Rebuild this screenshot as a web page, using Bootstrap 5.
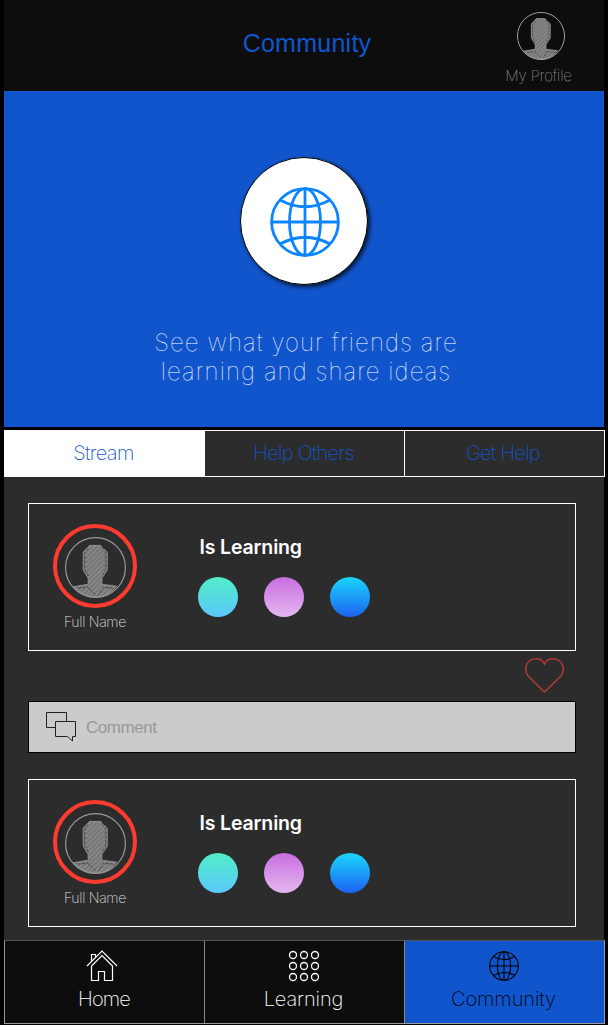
<!DOCTYPE html>
<html lang="en">
<head>
<meta charset="utf-8">
<meta name="viewport" content="width=device-width, initial-scale=1">
<title>Community</title>
<link href="https://cdn.jsdelivr.net/npm/bootstrap@5.3.0/dist/css/bootstrap.min.css" rel="stylesheet">
<style>
  body { background: #000; font-family: "Liberation Sans", Arial, sans-serif; height: 1025px; overflow: hidden; }
  svg { display: block; flex: none; overflow: visible; }
  .app { width: 601px; height: 1024px; margin-left: 4px; }
  .thin { font-family: Inter, "Liberation Sans", sans-serif; font-weight: 100; white-space: nowrap; }
  .topbar { width: 600px; height: 91px; background: #0d0d0d; }
  .topbar h1 { font-size: 25px; line-height: 30px; color: #1155cc; letter-spacing: .25px; padding-top: 28px; padding-left: 6px; }
  .profile { right: 29px; top: 12px; width: 68px; color: #aaa; }
  .profile span { font-size: 15px; line-height: 18px; margin: 7px 5px 0 0; letter-spacing: -.1px; color: #ddd; }
  .hero { width: 600px; height: 336px; background: #1155cc; color: #fff; padding-top: 66px; }
  .disc { width: 128px; height: 128px; border: 1px solid #000; background: #fff; box-shadow: 2px 2px 4px rgba(0,0,0,.75); color: #0a84ff; padding-left: 2px; padding-top: 2px; }
  .hero p { font-size: 24px; line-height: 29px; margin-top: 43px; margin-left: 4px; letter-spacing: 1.08px; }
  .tabs { height: 47px; margin-top: 3px; border: 1px solid #fff; background: #2c2c2c; }
  .tabs a { width: 200px; font-size: 20px; line-height: 45px; color: #1155cc; border-right: 1px solid #fff; letter-spacing: -.75px; font-weight: 200; }
  .tabs a:last-child { width: 199px; border: 0; padding-right: 3px; }
  .tabs a:nth-child(2) { padding-right: 2px; }
  .tabs a.active { background: #fff; padding-right: 2px; letter-spacing: -.6px; }
  .stream { width: 600px; height: 463px; background: #2c2c2c; padding: 26px 28px 0 24px; }
  .post { height: 148px; border: 1px solid #fff; padding: 20.4px 0 0 24px; }
  .who { width: 84px; color: #ddd; }
  .ring { width: 84px; height: 84px; border: 4px solid #ff3b30; padding: 9px 0 0 8px; color: #999; }
  .who span { font-size: 14px; line-height: 18px; margin-top: 4.600px; letter-spacing: -.28px; font-weight: 200; }
  .skills { margin-left: 61px; padding-top: 10.6px; }
  .skills h2 { font-size: 19.500px; line-height: 24px; margin: 0 0 18px 1.500px; color: #fff; font-family: Inter, sans-serif; font-weight: 600; letter-spacing: -.15px; }
  .dots { gap: 26px; }
  .dots i { width: 40px; height: 40px; }
  .d1 { background: linear-gradient(#52edc7, #5ac8fb); }
  .d2 { background: linear-gradient(#c86edf, #e4b7f0); }
  .d3 { background: linear-gradient(#1ad6fd, #1d62f0); }
  .likes { height: 50px; padding: 7px 11px 0 0; }
  .reply { height: 52px; border: 1px solid #000; background: #cbcbcb; margin-bottom: 26px; padding-left: 17px; color: #999; font-size: 17px; letter-spacing: -.45px; }
  .reply span { margin-left: 10px; padding-top: 1px; }
  .bottom { height: 84px; border: 1px solid #999; border-top-color: #555; background: #0d0d0d; }
  .bottom a { width: 200px; padding: 9px 2px 0 0; border-right: 1px solid #888; color: #fff; font-size: 20px; }
  .bottom a:last-child { width: 199px; border: 0; }
  .bottom a.active { background: #1155cc; color: #000; }
  .bottom span { line-height: 24px; margin-top: 5px; font-weight: 200; letter-spacing: -.1px; }
  .bottom a:first-child span { letter-spacing: -.9px; margin-right: -3px; }
</style>
</head>
<body>
<svg width="0" height="0" class="position-absolute" aria-hidden="true">
  <defs>
    <pattern id="hatch" width="5" height="5" patternUnits="userSpaceOnUse">
      <path d="M-1 1L1-1M-1 6L6-1M4 6L6 4" stroke="#a0a0a0" stroke-width=".9"/>
    </pattern>
    <path id="bust" d="M25 8.500h11l7 7v18l-5.500 8.500v6l15 2Q44 61 31 61T8.500 50.500l15-2.500v-6L18.500 33.500v-18z"/>
    <symbol id="avatar" viewBox="0 0 62 62">
      <use href="#bust" fill="#777"/>
      <use href="#bust" fill="url(#hatch)" stroke="currentColor" stroke-width=".8"/>
      <path d="M23.500 11.500l-3.500 4.500v17l4 7M38 10.500l3.500 5.500v17l-4 7M13 52l10-1 9 8.500M49 52l-10-1-5 8" fill="none" stroke="#333" stroke-width=".8" stroke-dasharray="3 1.500"/>
      <circle cx="31" cy="31" r="30.400" fill="none" stroke="currentColor" stroke-width="1.200"/>
    </symbol>
    <symbol id="globe" viewBox="0 0 70 70">
      <g fill="none" stroke="currentColor">
        <circle cx="35" cy="35" r="33.400"/>
        <ellipse cx="35" cy="35" rx="15.500" ry="33.400"/>
        <path d="M35 1.500v67M1.500 35h67M10 13q25 13.500 50 0M10 57q25-13.500 50 0"/>
      </g>
    </symbol>
  </defs>
</svg>

<div class="app d-flex flex-column">
  <header class="topbar position-relative text-center">
    <h1 class="m-0 fw-normal">Community</h1>
    <div class="profile position-absolute d-flex flex-column align-items-center">
      <svg width="48" height="48"><use href="#avatar"/></svg>
      <span class="thin">My Profile</span>
    </div>
  </header>

  <section class="hero d-flex flex-column align-items-center text-center">
    <div class="disc rounded-circle d-flex align-items-center justify-content-center">
      <svg width="70" height="70" stroke-width="2.800"><use href="#globe"/></svg>
    </div>
    <p class="thin mb-0">See what your friends are<br>learning and share ideas</p>
  </section>

  <nav class="tabs d-flex text-center flex-shrink-0">
    <a class="thin active text-decoration-none">Stream</a>
    <a class="thin text-decoration-none">Help Others</a>
    <a class="thin text-decoration-none">Get Help</a>
  </nav>

  <main class="stream flex-shrink-0">
    <article class="post d-flex">
      <div class="who d-flex flex-column align-items-center">
        <div class="ring rounded-circle"><svg width="61" height="61"><use href="#avatar"/></svg></div>
        <span class="thin">Full Name</span>
      </div>
      <div class="skills">
        <h2>Is Learning</h2>
        <div class="dots d-flex"><i class="d1 rounded-circle"></i><i class="d2 rounded-circle"></i><i class="d3 rounded-circle"></i></div>
      </div>
    </article>
    <div class="likes d-flex justify-content-end">
      <svg width="40" height="36" fill="none" stroke="#b33a36" stroke-width="1.500"><path d="M19.500 34L3.500 18.500C.5 15 .2 10 1.500 7 5-1 16.500-1 19.500 6 22.500-1 34-1 37.500 7c1.300 3 1 8-2 11.500z"/></svg>
    </div>
    <div class="reply d-flex align-items-center">
      <svg width="30" height="30" fill="none" stroke="#222"><path d="M9.500 15.500h-9V.5h20v9M9.500 9.500h20v15h-3v4.500l-5-4.500h-12z"/></svg>
      <span>Comment</span>
    </div>
    <article class="post d-flex">
      <div class="who d-flex flex-column align-items-center">
        <div class="ring rounded-circle"><svg width="61" height="61"><use href="#avatar"/></svg></div>
        <span class="thin">Full Name</span>
      </div>
      <div class="skills">
        <h2>Is Learning</h2>
        <div class="dots d-flex"><i class="d1 rounded-circle"></i><i class="d2 rounded-circle"></i><i class="d3 rounded-circle"></i></div>
      </div>
    </article>
  </main>

  <nav class="bottom d-flex flex-shrink-0">
    <a class="thin d-flex flex-column align-items-center text-decoration-none pe-1">
      <svg width="34" height="32" fill="none" stroke="#fff" stroke-width="1.200"><path d="M1 16L16 1 31 16M5.500 16V30.500h7v-9h6v9h8V16L16 5.500zM5.500 11.500V4.500h4v3"/></svg>
      <span>Home</span>
    </a>
    <a class="thin d-flex flex-column align-items-center text-decoration-none">
      <svg width="32" height="32" fill="none" stroke="#fff" stroke-width="1.300"><circle cx="5" cy="5" r="3.500"/><circle cx="16" cy="5" r="3.500"/><circle cx="27" cy="5" r="3.500"/><circle cx="5" cy="16" r="3.500"/><circle cx="16" cy="16" r="3.500"/><circle cx="27" cy="16" r="3.500"/><circle cx="5" cy="27" r="3.500"/><circle cx="16" cy="27" r="3.500"/><circle cx="27" cy="27" r="3.500"/></svg>
      <span>Learning</span>
    </a>
    <a class="thin active d-flex flex-column align-items-center text-decoration-none">
      <svg width="32" height="32" viewBox="-1 -1 32 32" stroke-width="2.600"><use href="#globe" width="30" height="30"/></svg>
      <span>Community</span>
    </a>
  </nav>
</div>
<script src="https://cdn.jsdelivr.net/npm/bootstrap@5.3.0/dist/js/bootstrap.bundle.min.js"></script>
</body>
</html>
